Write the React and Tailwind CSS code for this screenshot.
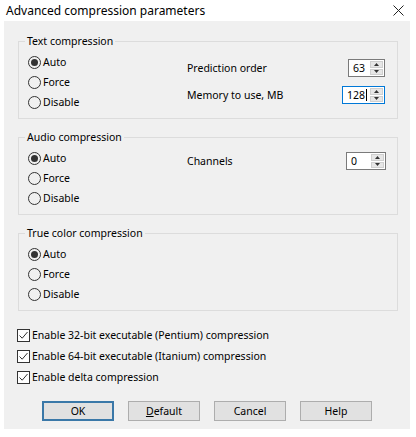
import React from 'react';

const font = "font-['Segoe_UI','Noto_Sans',sans-serif]";

// Round radio button, filled dot when selected
const Radio = ({ label, checked }) => (
  <div className="flex h-[20px] items-center">
    <span className="flex h-[13px] w-[13px] items-center justify-center rounded-full border border-[#333]">
      {checked && <span className="h-[7px] w-[7px] rounded-full bg-[#333]" />}
    </span>
    <span className="ml-[2px] text-[10.5px] leading-none text-black">{label}</span>
  </div>
);

const Check = ({ label }) => (
  <div className="flex h-[21px] items-center">
    <span className="flex h-[13px] w-[13px] items-center justify-center border border-[#333] bg-white">
      <svg width="11" height="11" viewBox="0 0 11 11">
        <path d="M1.5 5.5 L4.2 8.2 L9.5 2" fill="none" stroke="#333" strokeWidth="1" />
      </svg>
    </span>
    <span className="ml-[2px] text-[10.5px] leading-none text-black">{label}</span>
  </div>
);

// Numeric edit with up/down arrows
const Spin = ({ value, width, focused, caret }) => (
  <div
    className={`flex h-[18px] items-stretch bg-white border ${focused ? 'border-[#0078d7]' : 'border-[#7a7a7a]'}`}
    style={{ width }}
  >
    <div className="flex flex-1 items-center pl-[4px] text-[10.5px] leading-none text-black">
      {value}
      {caret && <span className="ml-[1px] inline-block h-[12px] w-px bg-black" />}
    </div>
    <div className="my-[1px] mr-[1px] flex w-[13px] flex-col gap-px">
      <div className="flex flex-1 items-center justify-center bg-[#e6e6e6] border border-[#cfcfcf]">
        <svg width="5" height="3" viewBox="0 0 5 3"><path d="M0 3 L2.5 0 L5 3 Z" fill="#333" /></svg>
      </div>
      <div className="flex flex-1 items-center justify-center bg-[#e6e6e6] border border-[#cfcfcf]">
        <svg width="5" height="3" viewBox="0 0 5 3"><path d="M0 0 L2.5 3 L5 0 Z" fill="#333" /></svg>
      </div>
    </div>
  </div>
);

const Group = ({ title, children, className = '' }) => (
  <div className={`relative ml-[14px] h-[78px] w-[380px] border border-[#dcdcdc] ${className}`}>
    <span className="absolute -top-[8px] left-[6px] bg-[#f0f0f0] px-[2px] text-[10.5px] leading-[14px] text-black">
      {title}
    </span>
    {children}
  </div>
);

const Button = ({ children, primary }) => (
  <button
    className={`flex h-[20px] w-[72px] items-center justify-center bg-[#e1e1e1] text-[10.5px] leading-none text-black ${
      primary ? 'border-2 border-[#3a78a8]' : 'border border-[#adadad]'
    }`}
  >
    {children}
  </button>
);

export default function App() {
  return (
    <div className={`h-[437px] w-[416px] bg-white ${font}`}>
      {/* Title bar */}
      <div className="flex h-[21px] items-center justify-between pl-[6px] pr-[12px]">
        <span className="text-[12px] leading-none text-black">Advanced compression parameters</span>
        <svg width="11" height="11" viewBox="0 0 11 11">
          <path d="M0.5 0.5 L10.5 10.5 M10.5 0.5 L0.5 10.5" stroke="#222" strokeWidth="1" />
        </svg>
      </div>

      <div className="ml-[4px] flex h-[408px] w-[406px] flex-col bg-[#f0f0f0] pt-[20px]">
        <Group title="Text compression">
          <div className="flex">
            <div className="w-[168px] pl-[9px] pt-[10px]">
              <Radio label="Auto" checked />
              <Radio label="Force" />
              <Radio label="Disable" />
            </div>
            <div className="flex flex-1 flex-col gap-[9px] pr-[12px] pt-[17px]">
              <div className="flex items-center justify-between">
                <span className="text-[10.5px] leading-none text-black">Prediction order</span>
                <Spin value="63" width={37} />
              </div>
              <div className="flex items-center justify-between">
                <span className="text-[10.5px] leading-none text-black">Memory to use, MB</span>
                <Spin value="128" width={43} focused caret />
              </div>
            </div>
          </div>
        </Group>

        <Group title="Audio compression" className="mt-[18px]">
          <div className="flex">
            <div className="w-[168px] pl-[9px] pt-[10px]">
              <Radio label="Auto" checked />
              <Radio label="Force" />
              <Radio label="Disable" />
            </div>
            <div className="flex flex-1 items-center justify-between self-start pr-[11px] pt-[14px]">
              <span className="text-[10.5px] leading-none text-black">Channels</span>
              <Spin value="0" width={40} />
            </div>
          </div>
        </Group>

        <Group title="True color compression" className="mt-[18px]">
          <div className="pl-[9px] pt-[10px]">
            <Radio label="Auto" checked />
            <Radio label="Force" />
            <Radio label="Disable" />
          </div>
        </Group>

        <div className="mt-[14px] pl-[13px]">
          <Check label="Enable 32-bit executable (Pentium) compression" />
          <Check label="Enable 64-bit executable (Itanium) compression" />
          <Check label="Enable delta compression" />
        </div>

        <div className="mt-[13px] flex gap-[14px] pl-[38px]">
          <Button primary>OK</Button>
          <Button>
            <span className="underline">D</span>efault
          </Button>
          <Button>Cancel</Button>
          <Button>Help</Button>
        </div>
      </div>
    </div>
  );
}
